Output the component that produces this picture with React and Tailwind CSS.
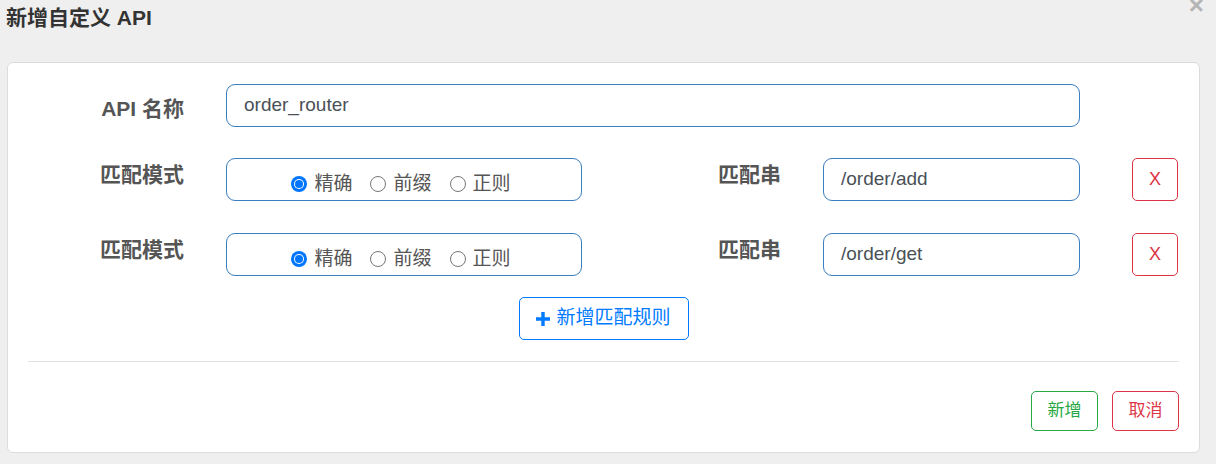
import React from "react";

const font = { fontFamily: '"Liberation Sans", "Noto Sans CJK SC", sans-serif' };

function Radio({ checked, label }) {
  return (
    <label className="flex items-center gap-[7px]">
      {checked ? (
        <span className="w-[16px] h-[16px] rounded-full bg-[#0075ff] flex items-center justify-center">
          <span className="w-[10px] h-[10px] rounded-full bg-white flex items-center justify-center">
            <span className="w-[8px] h-[8px] rounded-full bg-[#0075ff]" />
          </span>
        </span>
      ) : (
        <span className="w-[16px] h-[16px] rounded-full border border-[#767676] bg-white" />
      )}
      <span>{label}</span>
    </label>
  );
}

function MatchRow({ value }) {
  return (
    <div className="flex items-start">
      <div className="w-[198px] pr-[42px] text-right pt-[1px] text-[21px] font-bold text-[#555]">
        匹配模式
      </div>
      <div className="w-[356px] h-[43px] border border-[#3a7dc0] rounded-[9px] flex items-center justify-center pt-[9px] pr-[6px] gap-[18px] text-[19px] text-[#555]">
        <Radio checked label="精确" />
        <Radio label="前缀" />
        <Radio label="正则" />
      </div>
      <div className="w-[241px] pr-[42px] text-right pt-[1px] text-[21px] font-bold text-[#555]">
        匹配串
      </div>
      <div className="w-[257px] h-[43px] border border-[#3a7dc0] rounded-[9px] flex items-center pl-[17px] text-[19px] text-[#495057]">
        {value}
      </div>
      <button className="ml-[52px] w-[46px] h-[43px] border border-[#dc3545] rounded-[5px] text-[#dc3545] text-[18px] flex items-center justify-center bg-white">
        X
      </button>
    </div>
  );
}

export default function App() {
  return (
    <div className="w-[1216px] h-[464px] bg-[#efefef] relative overflow-hidden" style={font}>
      <div className="absolute right-[12px] top-[-8px] text-[26px] font-bold text-[#b5b5b5] leading-none">
        ×
      </div>
      <div className="pl-[6px] pt-[5px] h-[62px] text-[21px] font-bold text-[#333] leading-[26px]">
        新增自定义 API
      </div>
      <div className="ml-[7px] w-[1193px] h-[391px] bg-white border border-[#dcdcdc] rounded-[6px] px-[20px] pt-[21px]">
        <div className="flex items-start">
          <div className="w-[198px] pr-[42px] text-right pt-[9px] text-[21px] font-bold text-[#555]">
            API 名称
          </div>
          <div className="w-[854px] h-[43px] border border-[#3a7dc0] rounded-[9px] flex items-center pl-[17px] text-[19px] text-[#495057]">
            order_router
          </div>
        </div>
        <div className="mt-[31px]">
          <MatchRow value="/order/add" />
        </div>
        <div className="mt-[32px]">
          <MatchRow value="/order/get" />
        </div>
        <div className="mt-[21px] flex justify-center">
          <button className="w-[170px] h-[43px] border border-[#007bff] rounded-[5px] text-[#007bff] text-[19px] flex items-center justify-center gap-[6px] bg-white">
            <svg width="14" height="14" viewBox="0 0 14 14">
              <path d="M5.3 0h3.4v5.3H14v3.4H8.7V14H5.3V8.7H0V5.3h5.3z" fill="#007bff" />
            </svg>
            新增匹配规则
          </button>
        </div>
        <div className="mt-[21px] border-t border-[#e2e2e2]" />
        <div className="mt-[29px] flex justify-end gap-[14px]">
          <button className="w-[67px] h-[40px] border border-[#28a745] rounded-[5px] text-[#28a745] text-[17px] bg-white">
            新增
          </button>
          <button className="w-[67px] h-[40px] border border-[#dc3545] rounded-[5px] text-[#dc3545] text-[17px] bg-white">
            取消
          </button>
        </div>
      </div>
    </div>
  );
}
